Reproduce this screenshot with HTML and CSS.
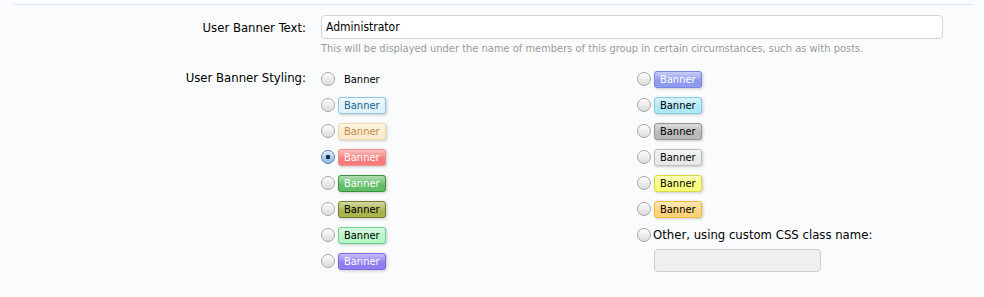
FILE: index.html
```html
<!DOCTYPE html>
<html lang="en">
<head>
<meta charset="UTF-8">
<meta name="viewport" content="width=device-width, initial-scale=1.0">
<title>User Group Banner</title>
<link rel="stylesheet" href="styles.css">
</head>
<body>
<div class="page">
  <div class="divider"></div>

  <dl class="ctrl-unit">
    <dt><label for="bannerText">User Banner Text:</label></dt>
    <dd>
      <input type="text" id="bannerText" class="text-ctrl" value="Administrator">
      <p class="explain">This will be displayed under the name of members of this group in certain circumstances, such as with posts.</p>
    </dd>
  </dl>

  <dl class="ctrl-unit">
    <dt><label>User Banner Styling:</label></dt>
    <dd>
      <ul class="banner-options">
        <li><input type="radio" name="style"><span class="banner plain">Banner</span></li>
        <li><input type="radio" name="style"><span class="banner royal">Banner</span></li>
        <li><input type="radio" name="style"><span class="banner staff">Banner</span></li>
        <li><input type="radio" name="style"><span class="banner sky">Banner</span></li>
        <li><input type="radio" name="style"><span class="banner cream">Banner</span></li>
        <li><input type="radio" name="style"><span class="banner gray">Banner</span></li>
        <li><input type="radio" name="style" checked><span class="banner red">Banner</span></li>
        <li><input type="radio" name="style"><span class="banner silver">Banner</span></li>
        <li><input type="radio" name="style"><span class="banner green">Banner</span></li>
        <li><input type="radio" name="style"><span class="banner yellow">Banner</span></li>
        <li><input type="radio" name="style"><span class="banner olive">Banner</span></li>
        <li><input type="radio" name="style"><span class="banner orange">Banner</span></li>
        <li><input type="radio" name="style"><span class="banner light-green">Banner</span></li>
        <li class="other">
          <label><input type="radio" name="style">Other, using custom CSS class name:</label>
          <input type="text" class="text-ctrl custom" disabled>
        </li>
        <li><input type="radio" name="style"><span class="banner violet">Banner</span></li>
      </ul>
    </dd>
  </dl>
</div>
</body>
</html>
```

FILE: styles.css
```css
/* Group banner options */
body {
  margin: 0;
  background-color: #fafbfc;
  font-family: 'DejaVu Sans Condensed', 'DejaVu Sans', sans-serif;
  font-size: 13px;
  color: #000;
}
.page {
  padding: 4px 11px 0 14px;
}
.divider {
  border-top: 1px solid #dbe7ee;
}
.ctrl-unit {
  display: flex;
  margin: 0;
}
.ctrl-unit dt {
  width: 292px;
  text-align: right;
  padding-top: 15px;
  line-height: 16px;
}
.ctrl-unit dd {
  flex: 1;
  margin: 0 0 0 15px;
  padding-top: 10px;
}
.ctrl-unit + .ctrl-unit dt {
  padding-top: 15px;
}
.ctrl-unit + .ctrl-unit dd {
  padding-top: 16px;
}
.text-ctrl {
  box-sizing: border-box;
  display: block;
  width: 622px;
  height: 24px;
  margin: 0;
  padding: 3px 4px;
  font-family: inherit;
  font-size: 12px;
  border: 1px solid #d3d3d3;
  border-radius: 4px;
  background-color: #fff;
}
.explain {
  margin: 3px 0 0;
  font-size: 11px;
  color: #9a9a9a;
}

.banner-options {
  list-style: none;
  margin: 0;
  padding: 0;
  display: grid;
  grid-template-columns: 316px 316px;
  grid-auto-rows: 26px;
}
.banner-options li {
  display: flex;
  align-items: flex-start;
}
.banner-options input[type="radio"] {
  appearance: none;
  -webkit-appearance: none;
  width: 14px;
  height: 14px;
  margin: 1px 3px 0 0;
  border: 1px solid #a6a6a6;
  border-radius: 50%;
  background: linear-gradient(#fdfdfd, #dcdcdc);
  box-shadow: inset 0 1px 1px rgba(255, 255, 255, 0.8);
  flex: none;
}
.banner-options input[type="radio"]:checked {
  border-color: #5a7fb6;
  background: radial-gradient(circle, #1b2a3f 0, #1b2a3f 2px, transparent 2.5px),
              linear-gradient(#d3e6fb, #8fb8ea);
}

.banner {
  display: inline-block;
  font-size: 11px;
  line-height: 15px;
  padding: 0 5px;
  border: 1px solid transparent;
  border-radius: 3px;
  box-shadow: 1px 1px 3px rgba(0, 0, 0, 0.2);
  background-image: linear-gradient(rgba(255, 255, 255, 0.5), rgba(255, 255, 255, 0) 60%);
}
.banner.plain {
  box-shadow: none;
  background: none;
  border-color: transparent;
  padding: 0 5px;
}
.banner.staff { color: #20618d; background-color: #dff3fb; border-color: #8fc6de; }
.banner.cream { color: #c08a4e; background-color: #fdebcd; border-color: #f3d8a8; }
.banner.red { color: #fff; background-color: #f77b7b; border-color: #f28f8f; }
.banner.green { color: #fff; background-color: #62be66; border-color: #3a9241; }
.banner.olive { color: #000; background-color: #aab44e; border-color: #747d26; }
.banner.light-green { color: #000; background-color: #b6f5c5; border-color: #6dd38a; }
.banner.violet { color: #fff; background-color: #8e7ef0; border-color: #7a68e0; }
.banner.royal { color: #fff; background-color: #8e9bee; border-color: #7b87e4; }
.banner.sky { color: #000; background-color: #b0e8f6; border-color: #7ccde6; }
.banner.gray { color: #000; background-color: #b9b9b9; border-color: #969696; }
.banner.silver { color: #000; background-color: #e8e8e8; border-color: #bdbdbd; }
.banner.yellow { color: #000; background-color: #fbfd7d; border-color: #d8dc3c; }
.banner.orange { color: #000; background-color: #fdd37a; border-color: #f1b93e; }

.banner-options li.other {
  flex-direction: column;
  grid-row: span 2;
}
.other label {
  display: flex;
  align-items: flex-start;
  line-height: 16px;
}
.other label input[type="radio"] {
  margin-right: 2px;
}
.text-ctrl.custom {
  width: 167px;
  height: 23px;
  margin: 6px 0 0 17px;
  background-color: #f0f0f0;
  border-color: #cdcdcd;
}
```
